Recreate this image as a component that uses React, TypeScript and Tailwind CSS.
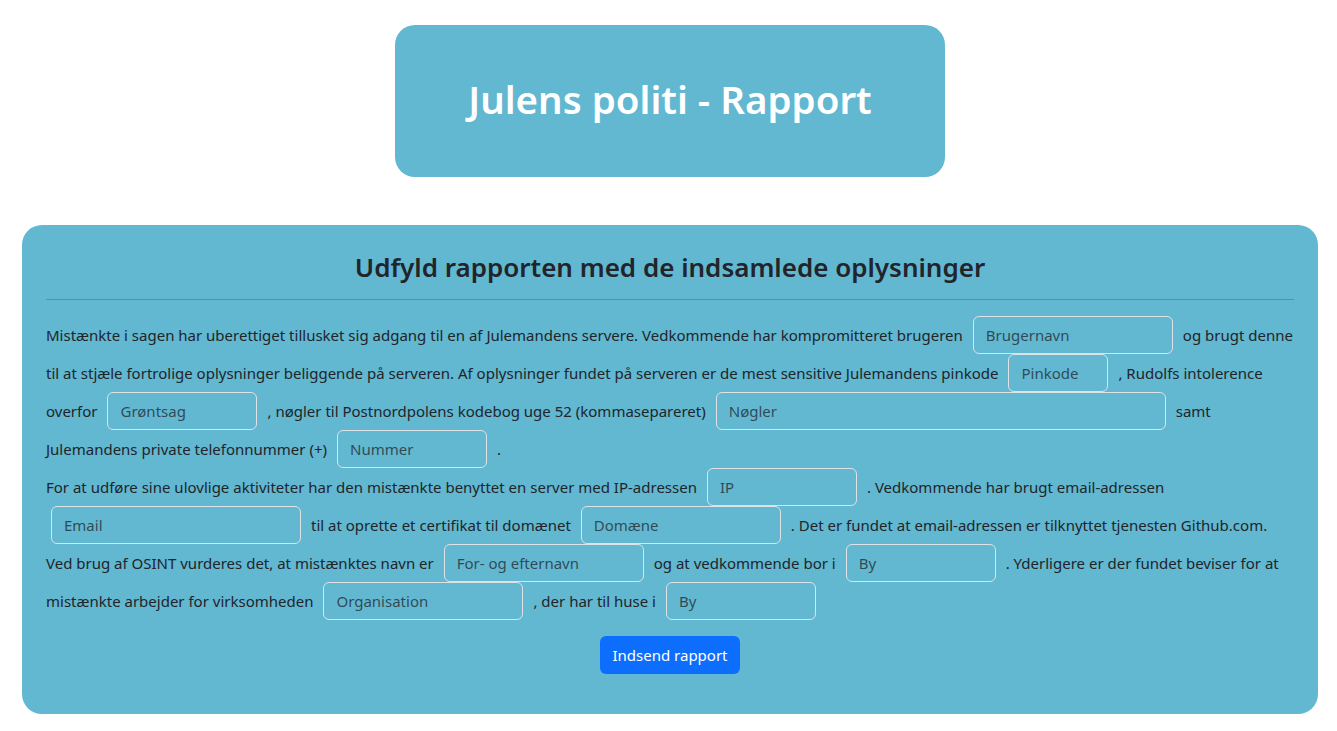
import React from "react";

const inputCls =
  "h-[38px] shrink-0 rounded-[6px] border border-[#dee2e6] bg-transparent px-3 text-[15px] text-[#212529] outline-none placeholder:text-[#212529bf]";

function Field({ ph, w, first }: { ph: string; w: string; first?: boolean }) {
  return (
    <input
      type="text"
      placeholder={ph}
      className={`${inputCls} ${w} ${first ? "ml-[5px] mr-[10px]" : "mx-[10px]"}`}
    />
  );
}

function Line({ children }: { children: React.ReactNode }) {
  return <div className="flex h-[38px] items-center whitespace-pre">{children}</div>;
}

export default function App() {
  return (
    <div
      className="min-h-screen bg-white pt-[25px] pb-[17px] text-[#212529]"
      style={{ fontFamily: '"Noto Sans", "Open Sans", sans-serif' }}
    >
      {/* titel */}
      <div className="ml-[395px] flex h-[152px] w-[550px] items-center justify-center rounded-[20px] bg-[#62b7d1] pb-[4px]">
        <h1 className="text-[38.5px] font-semibold leading-none text-white">Julens politi - Rapport</h1>
      </div>

      {/* rapport */}
      <div className="ml-[22px] mt-[48px] w-[1296px] rounded-[20px] bg-[#62b7d1] px-6 pt-6 pb-10">
        <h3 className="text-center text-[26px] font-semibold leading-[34px] pt-[1px]">
          Udfyld rapporten med de indsamlede oplysninger
        </h3>
        <hr className="mt-[15px] mb-4 border-t border-[#4e94a9]" />

        <div className="text-[15px]">
          <Line>
            Mistænkte i sagen har uberettiget tillusket sig adgang til en af Julemandens servere. Vedkommende har kompromitteret brugeren
            <Field ph="Brugernavn" w="w-[200px]" />
            og brugt denne
          </Line>
          <Line>
            til at stjæle fortrolige oplysninger beliggende på serveren. Af oplysninger fundet på serveren er de mest sensitive Julemandens pinkode
            <Field ph="Pinkode" w="w-[100px]" />
            , Rudolfs intolerence
          </Line>
          <Line>
            overfor
            <Field ph="Grøntsag" w="w-[150px]" />
            , nøgler til Postnordpolens kodebog uge 52 (kommasepareret)
            <Field ph="Nøgler" w="w-[450px]" />
            samt
          </Line>
          <Line>
            Julemandens private telefonnummer (+)
            <Field ph="Nummer" w="w-[150px]" />.
          </Line>
          <Line>
            For at udføre sine ulovlige aktiviteter har den mistænkte benyttet en server med IP-adressen
            <Field ph="IP" w="w-[150px]" />. Vedkommende har brugt email-adressen
          </Line>
          <Line>
            <Field ph="Email" w="w-[250px]" first />
            til at oprette et certifikat til domænet
            <Field ph="Domæne" w="w-[200px]" />. Det er fundet at email-adressen er tilknyttet tjenesten Github.com.
          </Line>
          <Line>
            Ved brug af OSINT vurderes det, at mistænktes navn er
            <Field ph="For- og efternavn" w="w-[200px]" />
            og at vedkommende bor i
            <Field ph="By" w="w-[150px]" />. Yderligere er der fundet beviser for at
          </Line>
          <Line>
            mistænkte arbejder for virksomheden
            <Field ph="Organisation" w="w-[200px]" />, der har til huse i
            <Field ph="By" w="w-[150px]" />
          </Line>
        </div>

        <div className="mt-[16px] flex justify-center">
          <button className="h-[38px] w-[140px] rounded-[6px] bg-[#0d6efd] text-[15px] text-white">Indsend rapport</button>
        </div>
      </div>
    </div>
  );
}
